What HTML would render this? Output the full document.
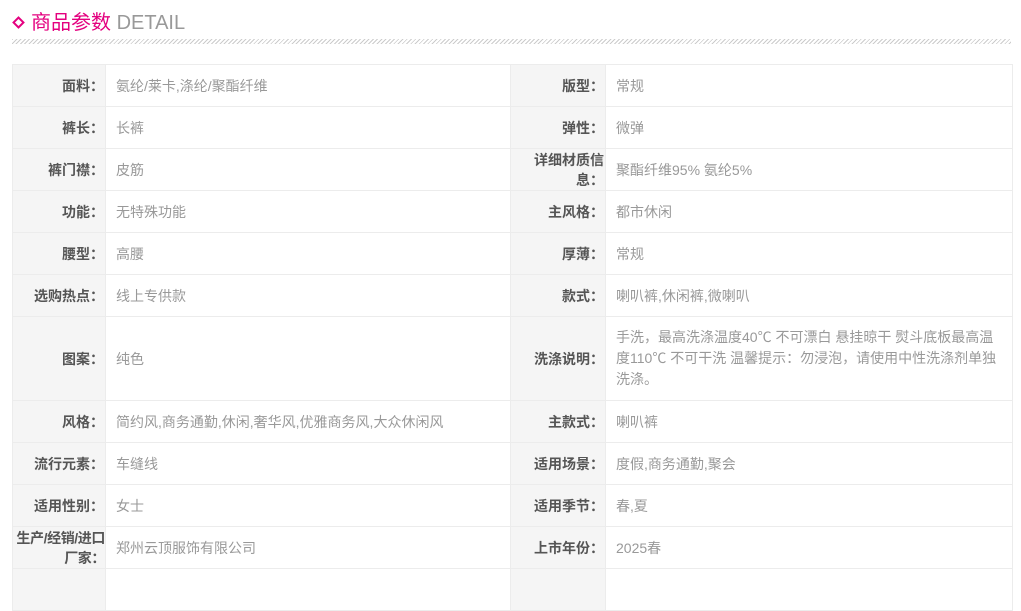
<!DOCTYPE html>
<html><head><meta charset="utf-8"><style>
*{margin:0;padding:0;box-sizing:border-box}
body{width:1021px;height:575px;overflow:hidden;background:#fff;font-family:"Liberation Sans","Noto Sans CJK SC",sans-serif}
.title{position:absolute;left:12px;top:8px;height:30px;font-size:20px;line-height:30px;white-space:nowrap}
.dia{display:inline-block;width:9px;height:9px;border:2.5px solid #e4007f;transform:rotate(45deg);margin:0 8px 2px 2px;vertical-align:middle}
.t1{color:#e4007f}.t2{color:#999;font-size:20px}
.line{position:absolute;left:12px;top:39px;width:999px;height:5px;background:repeating-linear-gradient(135deg,#ccc 0 1px,transparent 1px 3px)}
table{position:absolute;left:12px;top:64px;width:1000px;border-collapse:collapse;font-size:14px;table-layout:fixed}
td{border:1px solid #ececec;height:42px;vertical-align:middle;line-height:20px}
td.l{background:#f5f5f5;color:#555;font-weight:bold;text-align:right;padding-right:1px}
td.v{color:#999;padding-left:10px;padding-right:10px;font-size:14px}
</style></head><body>
<div class="title"><span class="dia"></span><span class="t1">商品参数</span> <span class="t2">DETAIL</span></div>
<div class="line"></div>
<table>
<colgroup><col style="width:93px"><col style="width:405px"><col style="width:95px"><col style="width:407px"></colgroup>
<tr><td class="l">面料：</td><td class="v">氨纶/莱卡,涤纶/聚酯纤维</td><td class="l">版型：</td><td class="v">常规</td></tr>
<tr><td class="l">裤长：</td><td class="v">长裤</td><td class="l">弹性：</td><td class="v">微弹</td></tr>
<tr><td class="l">裤门襟：</td><td class="v">皮筋</td><td class="l" style="white-space:nowrap">详细材质信<br>息：</td><td class="v">聚酯纤维95% 氨纶5%</td></tr>
<tr><td class="l">功能：</td><td class="v">无特殊功能</td><td class="l">主风格：</td><td class="v">都市休闲</td></tr>
<tr><td class="l">腰型：</td><td class="v">高腰</td><td class="l">厚薄：</td><td class="v">常规</td></tr>
<tr><td class="l">选购热点：</td><td class="v">线上专供款</td><td class="l">款式：</td><td class="v">喇叭裤,休闲裤,微喇叭</td></tr>
<tr><td class="l" style="height:84px">图案：</td><td class="v">纯色</td><td class="l">洗涤说明：</td><td class="v" style="line-height:21px">手洗，最高洗涤温度40℃ 不可漂白 悬挂晾干 熨斗底板最高温<br>度110℃ 不可干洗 温馨提示：勿浸泡，请使用中性洗涤剂单独<br>洗涤。</td></tr>
<tr><td class="l">风格：</td><td class="v">简约风,商务通勤,休闲,奢华风,优雅商务风,大众休闲风</td><td class="l">主款式：</td><td class="v">喇叭裤</td></tr>
<tr><td class="l">流行元素：</td><td class="v">车缝线</td><td class="l">适用场景：</td><td class="v">度假,商务通勤,聚会</td></tr>
<tr><td class="l">适用性别：</td><td class="v">女士</td><td class="l">适用季节：</td><td class="v">春,夏</td></tr>
<tr><td class="l" style="padding-right:0;white-space:nowrap;letter-spacing:-0.4px">生产/经销/进口<br>厂家：</td><td class="v">郑州云顶服饰有限公司</td><td class="l">上市年份：</td><td class="v">2025春</td></tr>
<tr><td class="l">&nbsp;</td><td class="v"></td><td class="l"></td><td class="v"></td></tr>
</table>
</body></html>
